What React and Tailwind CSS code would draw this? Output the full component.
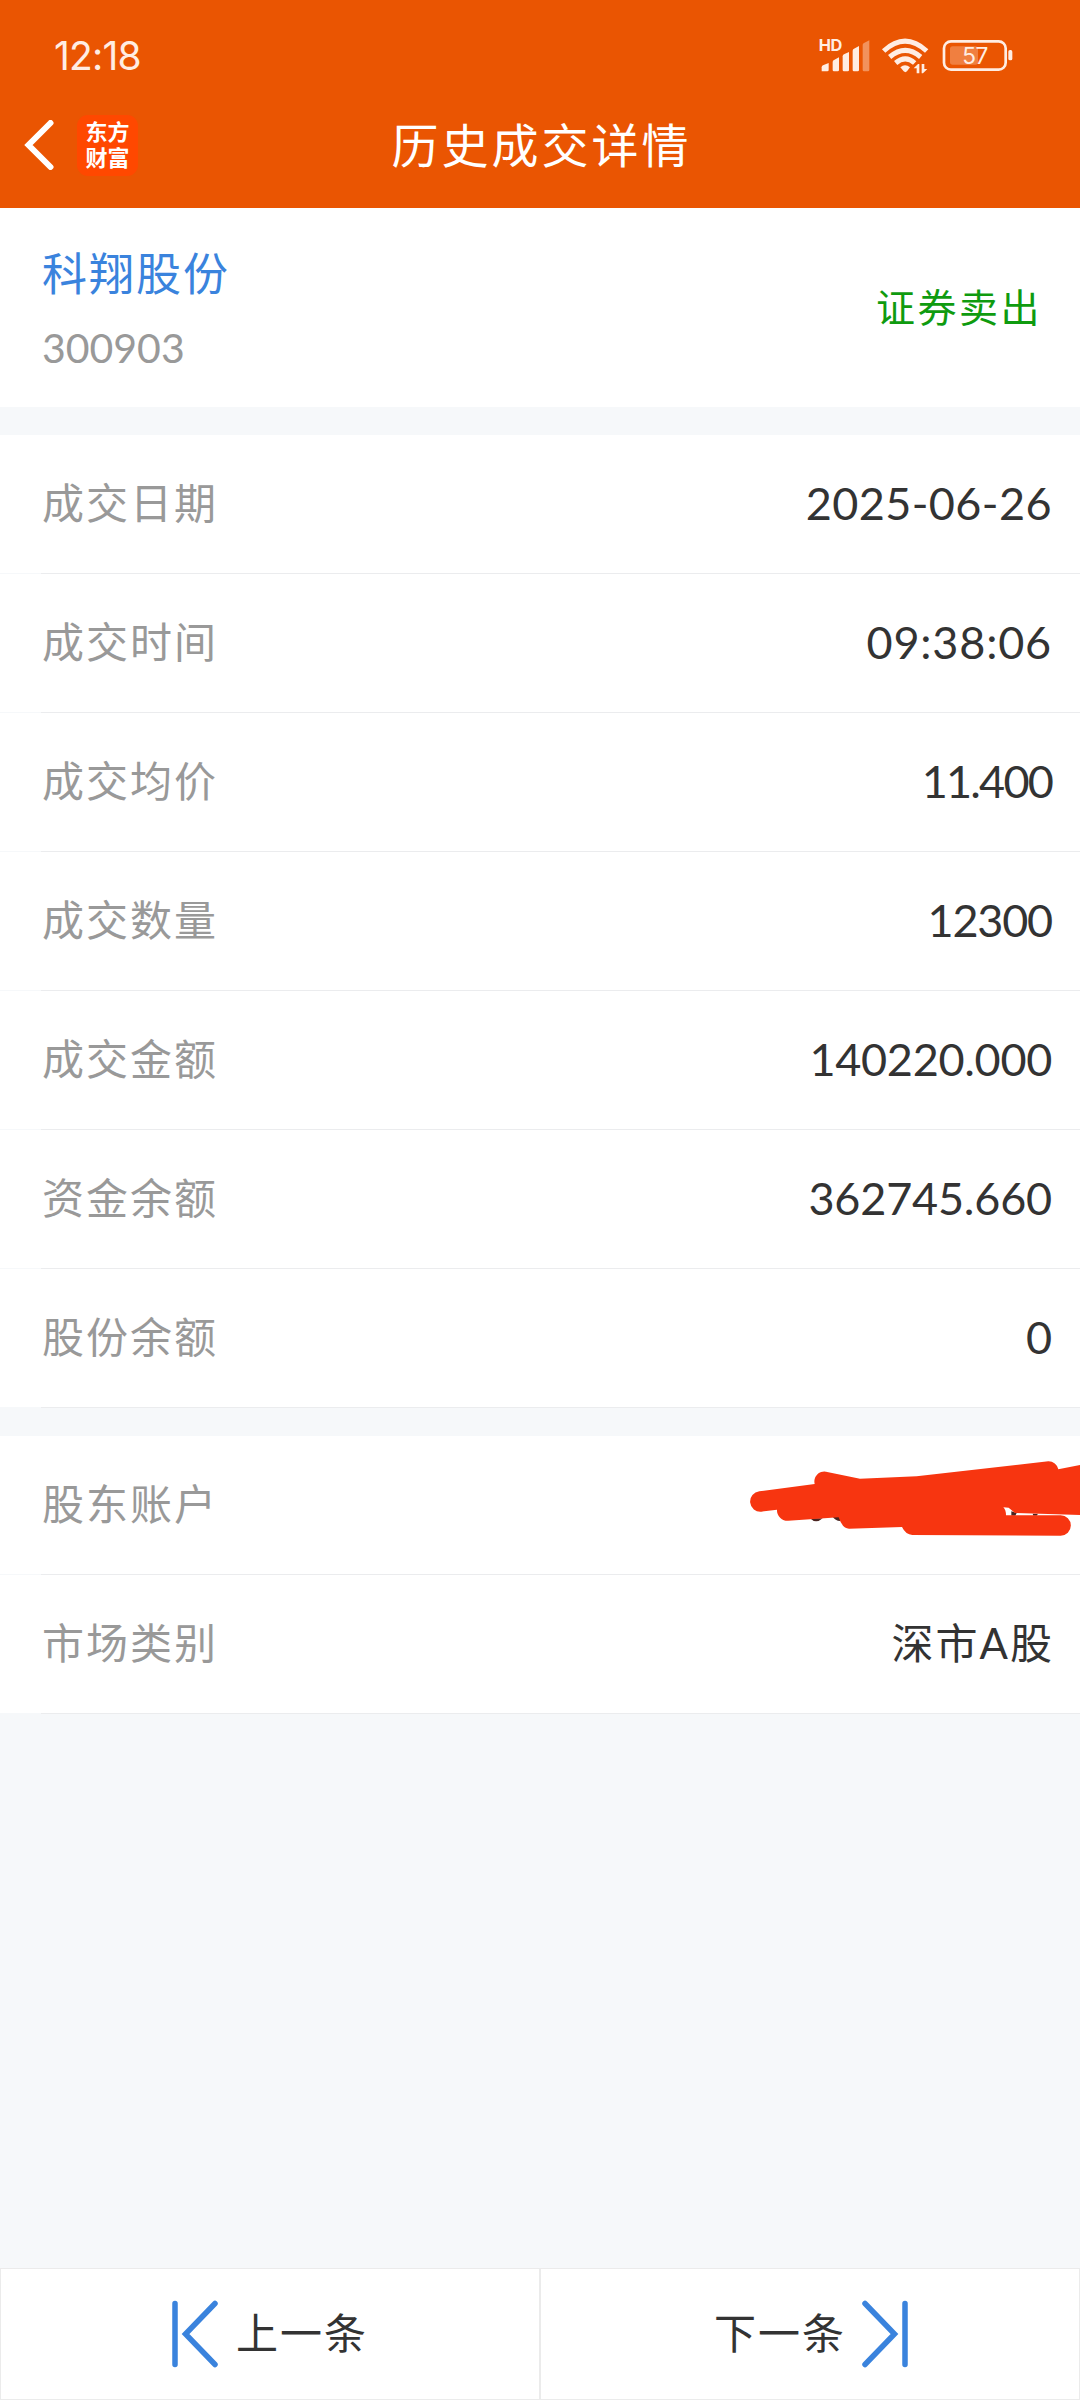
const tradeRows = [
  { label: "成交日期", value: "2025-06-26", tracking: "tracking-[0.4px]" },
  { label: "成交时间", value: "09:38:06", tracking: "tracking-[0.8px]" },
  { label: "成交均价", value: "11.400", tracking: "tracking-[-1.8px]" },
  { label: "成交数量", value: "12300", tracking: "tracking-[-1.2px]" },
  { label: "成交金额", value: "140220.000", tracking: "tracking-[-0.3px]" },
  { label: "资金余额", value: "362745.660", tracking: "tracking-[-0.2px]" },
  { label: "股份余额", value: "0", tracking: "tracking-[0px]" },
];

const StatusIcons = () => {
  return (
    <svg className="-mt-[8px] w-[200px] h-[50px]" viewBox="110 20 600 150" fill="#ffede3">
      <text x="115" y="93" fontSize="49" fontWeight="700" fontFamily="Inter, sans-serif" letterSpacing="-1">
        HD
      </text>
      <path d="M124 153v-12q0-4 4-6l17-7v21q0 4-4 4z" />
      <path d="M157 149v-24q0-4 4-6l15-8v38q0 4-4 4h-11q-4 0-4-4z" />
      <path d="M187 149v-41q0-4 4-6l15-7v54q0 4-4 4h-11q-4 0-4-4z" />
      <path d="M217 149v-58q0-4 4-6l15-8v72q0 4-4 4h-11q-4 0-4-4z" />
      <path opacity=".4" d="M247 149v-75q0-4 4-6l16-8v89q0 4-4 4h-12q-4 0-4-4z" />

      <g fill="none" stroke="#ffede3" strokeWidth="15">
        <path d="M310 92q64-59 129 0" />
        <path d="M328 110q47-40 93 0" />
        <path d="M346 128q29-25 57 0" />
      </g>
      <path d="M360 141q14-13 29 0l-9 12q-5 5-10 0z" />
      <path d="M400 144l13-13h4v28h-8v-15zM424 131h8v15h9l-13 13h-4z" />

      <rect x="491" y="63" width="185" height="85" rx="21" fill="none" stroke="#ffede3" strokeWidth="8" />
      <rect x="509" y="78" width="84" height="55" rx="8" opacity=".28" />
      <rect x="684" y="89" width="12" height="31" rx="5" />
      <text x="546" y="131" fontSize="68" fontFamily="Inter, sans-serif" letterSpacing="-2">
        57
      </text>
    </svg>
  );
};

const Header = () => {
  return (
    <header className="h-[208px] bg-[#ea5502] text-white">
      <div className="h-[84px] pt-[35px] pl-[54px] pr-[63px] flex justify-between items-start">
        <span className="font-[Inter] text-[39px] leading-[42px] tracking-[-0.8px] text-[#ffede3]">
          12:18
        </span>
        <StatusIcons />
      </div>
      <div className="h-[124px] pb-[2px] grid grid-cols-3 items-center">
        <div className="flex items-center pl-[24px]">
          <svg className="w-[30px] h-[50px]" viewBox="0 0 30 50" fill="none" stroke="white" strokeWidth="6" strokeLinecap="round">
            <path d="M26.500 3L4.500 25L26.500 47" />
          </svg>
          <div className="ml-[23px] w-[61px] h-[61px] rounded-[11px] bg-[#ff4800] flex items-center justify-center text-center text-[22px] leading-[26px] font-bold">
            东方
            <br />
            财富
          </div>
        </div>
        <h1 className="pl-[3px] text-center text-[47px] tracking-[3px] whitespace-nowrap">历史成交详情</h1>
      </div>
    </header>
  );
};

const Row = ({ label, children }) => {
  return (
    <div>
      <div className="relative h-[138px] bg-white pl-[42px] pr-[28px] pb-[2px] flex items-center justify-between">
        <span className="text-[42px] tracking-[2px] text-[#999999]">{label}</span>
        {children}
      </div>
      <div className="h-px ml-[41px] bg-[#ebecee]" />
    </div>
  );
};

const Scribble = () => {
  return (
    <svg className="absolute right-0 top-0 w-[360px] h-[139px]" viewBox="0 168 1080 417">
      <g fill="#4a2420">
        <path d="M270 415q18 18 38 0z" />
        <path d="M338 410q8 12 22 13v-13z" />
        <path d="M874 394l16 5-4 8h-12zM938 401h16l-4 6h-10z" />
      </g>
      <path
        fill="#f73510"
        d="M118 334L284 312A30 30 0 0 1 318 275L420 296L590 289L985 244A30 30 0 0 1 1015 268L1080 255V405L885 399L866 383L850 382Q858 390 858 406H1022A30 30 0 0 1 1022 467L577 465Q557 464 546 441L387 446Q367 446 356 412L205 422A31 31 0 0 1 171 389L124 395A30 30 0 0 1 118 334Z"
      />
    </svg>
  );
};

const Footer = () => {
  return (
    <footer className="h-[132px] grid grid-cols-2 text-[42px] tracking-[2px] text-[#333333]">
      <button className="bg-white border border-[#ebebeb] pb-[1px] flex items-center justify-center">
        <svg className="w-[46px] h-[68px] mr-[18px]" viewBox="0 0 46 68" fill="none" stroke="#3a83dd" strokeWidth="5.500" strokeLinecap="round">
          <path d="M3 3.500V64.500M43 3.500L13.500 34L43 64.500" />
        </svg>
        上一条
      </button>
      <button className="bg-white border border-[#ebebeb] pb-[1px] pl-[2px] flex items-center justify-center">
        下一条
        <svg className="w-[46px] h-[68px] ml-[16px]" viewBox="0 0 46 68" fill="none" stroke="#3a83dd" strokeWidth="5.500" strokeLinecap="round">
          <path d="M43 3.500V64.500M3 3.500L32.500 34L3 64.500" />
        </svg>
      </button>
    </footer>
  );
};

const App = () => {
  return (
    <div className="w-[1080px] h-[2400px] flex flex-col bg-[#f6f8fa] font-['Lato','Noto_Sans_CJK_SC',sans-serif] overflow-hidden">
      <Header />

      <section className="h-[199px] bg-white pl-[42px] pr-[38px] flex justify-between items-center">
        <div className="pt-[6px]">
          <h2 className="text-[45px] leading-[66px] tracking-[2px] text-[#3a83dd]">科翔股份</h2>
          <p className="mt-[8px] text-[41px] leading-[66px] tracking-[0px] text-[#999999]">300903</p>
        </div>
        <span className="text-[39px] tracking-[2.500px] text-[#0f9b0f]">证券卖出</span>
      </section>

      <section className="mt-[28px]">
        {tradeRows.map((row) => (
          <Row key={row.label} label={row.label}>
            <span className={`pt-[2px] text-[45px] text-[#333333] ${row.tracking}`}>{row.value}</span>
          </Row>
        ))}
      </section>

      <section className="mt-[28px]">
        <Row label="股东账户">
          <Scribble />
        </Row>
        <Row label="市场类别">
          <span className="-mr-[2px] text-[42px] tracking-[2px] text-[#333333]">深市A股</span>
        </Row>
      </section>

      <div className="flex-1" />
      <Footer />
    </div>
  );
};

export default App;
